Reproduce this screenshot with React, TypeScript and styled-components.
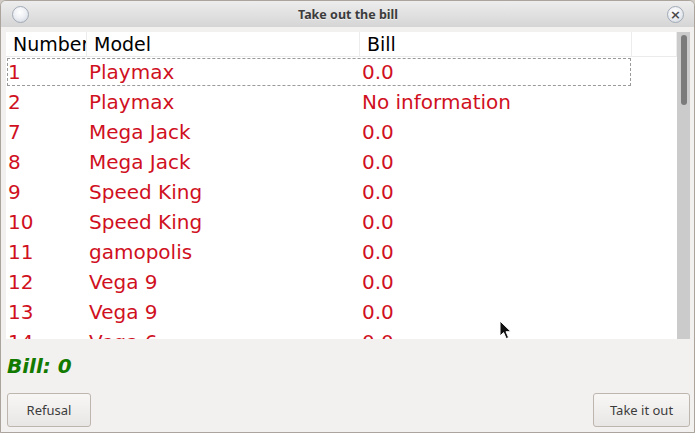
import styled, { createGlobalStyle } from "styled-components";

const GlobalStyle = createGlobalStyle`
  html, body {
    margin: 0;
    padding: 0;
    background: #cfcac4;
  }
`;

type Machine = { number: number; model: string; bill: string };

const machines: Machine[] = [
  { number: 1, model: "Playmax", bill: "0.0" },
  { number: 2, model: "Playmax", bill: "No information" },
  { number: 7, model: "Mega Jack", bill: "0.0" },
  { number: 8, model: "Mega Jack", bill: "0.0" },
  { number: 9, model: "Speed King", bill: "0.0" },
  { number: 10, model: "Speed King", bill: "0.0" },
  { number: 11, model: "gamopolis", bill: "0.0" },
  { number: 12, model: "Vega 9", bill: "0.0" },
  { number: 13, model: "Vega 9", bill: "0.0" },
  { number: 14, model: "Vega 6", bill: "0.0" },
];

const App = () => {
  return (
    <>
      <GlobalStyle />
      <Window>
        <TitleBar>
          <RoundButton />
          <Title>Take out the bill</Title>
          <CloseButton>×</CloseButton>
        </TitleBar>
        <Content>
          <TableFrame>
            <Viewport>
              <HeaderRow>
                <HeaderCell>Number</HeaderCell>
                <HeaderCell>Model</HeaderCell>
                <HeaderCell>Bill</HeaderCell>
                <HeaderCell />
              </HeaderRow>
              {machines.map((m, i) => (
                <Row key={m.number} $focused={i === 0}>
                  <Cell>{m.number}</Cell>
                  <Cell>{m.model}</Cell>
                  <Cell>{m.bill}</Cell>
                </Row>
              ))}
            </Viewport>
            <ScrollTrack>
              <ScrollThumb />
            </ScrollTrack>
          </TableFrame>
          <BillLabel>Bill: 0</BillLabel>
          <ButtonRow>
            <Button $width={84}>Refusal</Button>
            <Button $width={97}>Take it out</Button>
          </ButtonRow>
        </Content>
        <Cursor width="14" height="21" viewBox="0 0 14 21">
          <path
            d="M1 1 L1 16 L4.6 12.6 L7.2 18.6 L9.6 17.6 L7 11.7 L12 11.7 Z"
            fill="#111"
            stroke="#fff"
            strokeWidth="1"
          />
        </Cursor>
      </Window>
    </>
  );
};

const Window = styled.div`
  position: relative;
  width: 695px;
  height: 433px;
  box-sizing: border-box;
  display: flex;
  flex-direction: column;
  background: #f2f1f0;
  border: 1px solid #aaa49d;
  border-radius: 6px 6px 0 0;
  overflow: hidden;
`;

const TitleBar = styled.div`
  display: flex;
  align-items: center;
  justify-content: space-between;
  height: 26px;
  padding: 0 10px 0 11px;
  background: linear-gradient(#ededed, #d5d5d5);
  box-sizing: border-box;
`;

const RoundButton = styled.div`
  width: 15px;
  height: 15px;
  border-radius: 50%;
  border: 1px solid #a3aab5;
  background: radial-gradient(circle at 45% 35%, #ffffff 0%, #eef0f4 45%, #cdd3dc 100%);
`;

const Title = styled.div`
  font-family: "Noto Sans", sans-serif;
  font-weight: 700;
  font-size: 12.5px;
  color: #3c3c3c;
  text-shadow: 0 1px 0 rgba(255, 255, 255, 0.6);
`;

const CloseButton = styled.div`
  width: 15px;
  height: 15px;
  border-radius: 50%;
  border: 1px solid #a3aab5;
  background: radial-gradient(circle at 45% 35%, #ffffff 0%, #eef0f4 45%, #cdd3dc 100%);
  display: flex;
  align-items: center;
  justify-content: center;
  font-family: "DejaVu Sans", sans-serif;
  font-weight: 700;
  font-size: 13px;
  line-height: 1;
  color: #4a4a4a;
`;

const Content = styled.div`
  display: flex;
  flex-direction: column;
  flex: 1;
  padding: 5px 4px 0 5px;
`;

const TableFrame = styled.div`
  display: flex;
  height: 307px;
`;

const Viewport = styled.div`
  flex: 1;
  background: #ffffff;
  overflow: hidden;
`;

const columns = "81px 273px 272px";

const HeaderRow = styled.div`
  display: grid;
  grid-template-columns: ${columns} 1fr;
  height: 25px;
  border-bottom: 1px solid #ebebeb;
  box-sizing: border-box;
`;

const HeaderCell = styled.div`
  padding: 0 0 0 7px;
  border-right: 1px solid #ececec;
  font-family: "DejaVu Sans", sans-serif;
  font-size: 19px;
  line-height: 25px;
  color: #000;
  white-space: nowrap;
  overflow: hidden;
`;

const Row = styled.div<{ $focused?: boolean }>`
  display: grid;
  grid-template-columns: ${columns};
  width: 626px;
  height: 30px;
  outline: ${(p) => (p.$focused ? "1px dashed #9a9a9a" : "none")};
  outline-offset: -2px;
`;

const Cell = styled.div`
  padding: 0 2px;
  font-family: "DejaVu Sans", sans-serif;
  font-size: 20px;
  line-height: 30px;
  color: #d0101e;
  white-space: nowrap;
  overflow: hidden;
`;

const ScrollTrack = styled.div`
  width: 13px;
  background: #cbcbcb;
  padding: 3px 0 0 4px;
  box-sizing: border-box;
`;

const ScrollThumb = styled.div`
  width: 6px;
  height: 70px;
  border-radius: 3px;
  background: #7b7b7b;
`;

const BillLabel = styled.div`
  margin-top: 15px;
  padding-left: 1px;
  font-family: "DejaVu Sans", sans-serif;
  font-weight: 700;
  font-style: italic;
  font-size: 20px;
  line-height: 24px;
  color: #137a00;
`;

const ButtonRow = styled.div`
  display: flex;
  justify-content: space-between;
  margin-top: 15px;
  padding-left: 1px;
`;

const Button = styled.div<{ $width: number }>`
  width: ${(p) => p.$width}px;
  height: 34px;
  box-sizing: border-box;
  display: flex;
  align-items: center;
  justify-content: center;
  border: 1px solid #bdb6ae;
  border-radius: 3px;
  background: linear-gradient(#f8f7f6, #e9e7e5);
  font-family: "Noto Sans", sans-serif;
  font-size: 13px;
  color: #3c3c3c;
`;

const Cursor = styled.svg`
  position: absolute;
  left: 498px;
  top: 319px;
`;

export default App;
